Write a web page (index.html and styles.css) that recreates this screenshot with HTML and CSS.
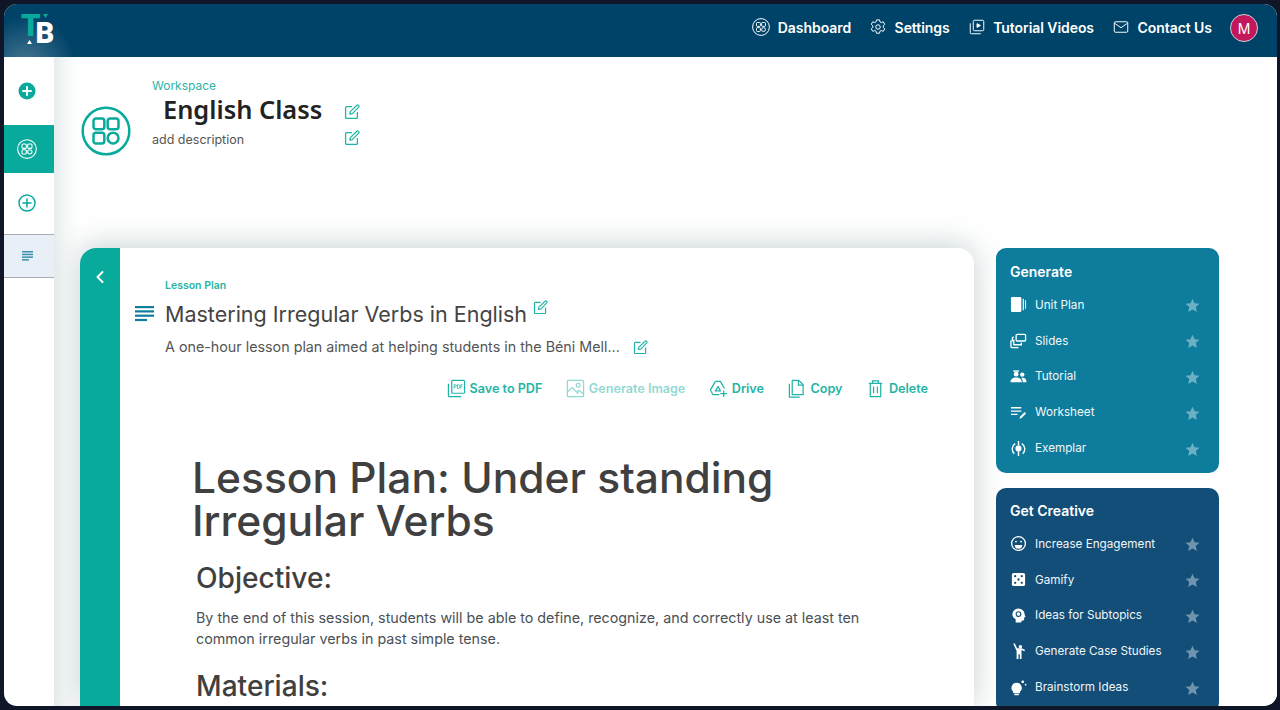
FILE: index.html
```html
<!DOCTYPE html>
<html lang="en">
<head>
	<meta charset="UTF-8">
	<title>English Class</title>
	<link rel="stylesheet" href="styles.css">
</head>
<body>
<svg class="defs" width="0" height="0">
	<symbol id="edit" viewBox="0 0 16 16">
		<path d="M8 2.600H2.600a1 1 0 0 0-1 1v9.800a1 1 0 0 0 1 1h9.800a1 1 0 0 0 1-1V8" fill="none" stroke="currentColor" stroke-width="1.300"/>
		<path d="M5.800 10.200l.5-2.600 6.600-6.300a1 1 0 0 1 1.400 0l.4.4a1 1 0 0 1 0 1.400L8.300 9.700z" fill="none" stroke="currentColor" stroke-width="1.200" stroke-linejoin="round"/>
	</symbol>
	<symbol id="apps" viewBox="0 0 24 24">
		<g fill="none" stroke="currentColor">
			<circle cx="12" cy="12" r="11.200"/>
			<rect x="6" y="6" width="5.200" height="5.200" rx="1.200"/>
			<rect x="12.800" y="6" width="5.200" height="5.200" rx="1.200"/>
			<rect x="6" y="12.800" width="5.200" height="5.200" rx="1.200"/>
			<circle cx="15.400" cy="15.400" r="2.600"/>
		</g>
	</symbol>
	<symbol id="star" viewBox="0 0 16 16">
		<path d="M8 .8l2.200 4.800 5.200.6-3.900 3.500 1.100 5.200L8 12.300l-4.600 2.600 1.100-5.200L.6 6.200l5.200-.6z" fill="currentColor"/>
	</symbol>
</svg>

<div class="app">
	<header class="topbar">
		<div class="logo">
			<span class="logo_t">T</span><span class="logo_b">B</span>
			<svg class="logo_marks" width="30" height="34" viewBox="0 0 30 34"><path d="M22 4h5l-2.500 4z" fill="#08AB9B"/><path d="M8.500 30l2.500 4H6z" fill="#fff"/></svg>
		</div>
		<nav class="topnav">
			<a><svg class="navicon" viewBox="0 0 24 24"><use href="#apps"/></svg>Dashboard</a>
			<a><svg class="navicon" viewBox="0 0 24 24" fill="none" stroke="currentColor"><path d="M10 2.500h4l.6 2.700 1.900.9 2.500-1.100 2 3.400-2 1.900v2.200l2 1.900-2 3.400-2.500-1.100-1.900.9-.6 2.700h-4l-.6-2.700-1.900-.9-2.500 1.100-2-3.400 2-1.900v-2.200l-2-1.900 2-3.400 2.500 1.100 1.900-.9z" stroke-linejoin="round"/><circle cx="12" cy="12" r="3"/></svg>Settings</a>
			<a><svg class="navicon" viewBox="0 0 24 24" fill="none" stroke="currentColor"><rect x="7" y="3" width="14" height="14" rx="1.500"/><path d="M3 7v12.500A1.500 1.500 0 0 0 4.500 21H17"/><path d="M12 7.500l4.500 2.500-4.500 2.500z" fill="currentColor"/></svg>Tutorial Videos</a>
			<a><svg class="navicon" viewBox="0 0 24 24" fill="none" stroke="currentColor"><rect x="3" y="5" width="18" height="14" rx="1.500"/><path d="M3.500 7l8.500 6 8.500-6"/></svg>Contact Us</a>
			<span class="avatar">M</span>
		</nav>
	</header>

	<div class="below">
		<aside class="sidebar">
			<div class="side_item side_first">
				<svg class="sideicon" viewBox="0 0 18 18"><circle cx="9" cy="9" r="8.500" fill="#08AB9B"/><path d="M9 5v8M5 9h8" stroke="#fff" stroke-width="2" stroke-linecap="round"/></svg>
			</div>
			<div class="side_item side_active">
				<svg class="sideicon_big"><use href="#apps"/></svg>
			</div>
			<div class="side_item">
				<svg class="sideicon" viewBox="0 0 18 18" fill="none" stroke="#08AB9B" stroke-width="1.500"><circle cx="9" cy="9" r="8"/><path d="M9 5v8M5 9h8" stroke-linecap="round"/></svg>
			</div>
			<div class="side_doc">
				<svg width="11" height="10" viewBox="0 0 11 10" fill="#3E8FB0"><rect width="11" height="1.500"/><rect y="2.700" width="11" height="1.500"/><rect y="5.400" width="11" height="1.500"/><rect y="8.100" width="7" height="1.500"/></svg>
			</div>
		</aside>

		<main class="content">
			<section class="workspace">
				<svg class="ws_icon"><use href="#apps"/></svg>
				<div class="ws_text">
					<div class="ws_label">Workspace</div>
					<div class="ws_title_row">
						<h1 class="ws_title">English Class</h1>
						<svg class="edit"><use href="#edit"/></svg>
					</div>
					<div class="ws_desc_row">
						<span class="ws_desc">add description</span>
						<svg class="edit"><use href="#edit"/></svg>
					</div>
				</div>
			</section>

			<section class="columns">
				<article class="card">
					<div class="rail">
						<svg width="10" height="14" viewBox="0 0 10 14" fill="none" stroke="#fff" stroke-width="2" stroke-linecap="round" stroke-linejoin="round"><path d="M7.500 2L2.500 7l5 5"/></svg>
					</div>
					<div class="card_body">
						<div class="lp_label">Lesson Plan</div>
						<div class="lp_title_row">
							<svg class="lp_icon" width="19" height="16" viewBox="0 0 19 16" fill="#0E7C9C"><rect width="19" height="2.200"/><rect y="4.300" width="19" height="2.200"/><rect y="8.600" width="19" height="2.200"/><rect y="12.900" width="12" height="2.200"/></svg>
							<h2 class="lp_title">Mastering Irregular Verbs in English</h2>
							<svg class="edit small up"><use href="#edit"/></svg>
						</div>
						<div class="lp_desc_row">
							<span class="lp_desc">A one-hour lesson plan aimed at helping students in the Béni Mell...</span>
							<svg class="edit small"><use href="#edit"/></svg>
						</div>
						<div class="actions">
							<a><svg viewBox="0 0 20 20" fill="none" stroke="currentColor" stroke-width="1.300"><rect x="5" y="1.500" width="13.500" height="13.500" rx="1"/><path d="M1.500 5v12.500a1 1 0 0 0 1 1H15"/><path d="M7.500 10V6h1.300a1 1 0 0 1 0 2.200H7.500M11 6v4h.8a1.500 1.500 0 0 0 0-4zM14.500 10V6h2M14.500 8h1.600" stroke-width=".8"/></svg>Save to PDF</a>
							<a class="faded"><svg viewBox="0 0 20 20" fill="none" stroke="currentColor" stroke-width="1.300"><rect x="1.500" y="1.500" width="17" height="17" rx="1"/><circle cx="12.800" cy="6.500" r="2"/><path d="M1.800 13.500L6.500 9l6.500 6.500M11.500 14l2.300-2 4.500 3.800"/></svg>Generate Image</a>
							<a><svg viewBox="0 0 20 20" fill="none" stroke="currentColor" stroke-width="1.300" stroke-linejoin="round"><path d="M6.800 2.500h5.200l4.300 7.500M6.800 2.500L1.500 11.500l2.700 5H11"/><path d="M6.500 13l3-5 2.500 4.500H7"/><path d="M15.500 12.500v6M12.500 15.500h6" stroke-linecap="round"/></svg>Drive</a>
							<a><svg viewBox="0 0 20 20" fill="none" stroke="currentColor" stroke-width="1.300" stroke-linejoin="round"><path d="M5.500 1.500h7l4.500 4.500v10.500h-11.500z"/><path d="M12 1.500v5h5"/><path d="M2.500 5v14h11"/></svg>Copy</a>
							<a><svg viewBox="0 0 20 20" fill="none" stroke="currentColor" stroke-width="1.300"><path d="M3 4.500h14M7 4.500V2h6v2.500M4.500 4.500v14h11v-14M8 8v7M12 8v7"/></svg>Delete</a>
						</div>
						<div class="doc">
							<h1>Lesson Plan: Under standing Irregular Verbs</h1>
							<h2>Objective:</h2>
							<p>By the end of this session, students will be able to define, recognize, and correctly use at least ten common irregular verbs in past simple tense.</p>
							<h2>Materials:</h2>
						</div>
					</div>
				</article>

				<div class="panels">
					<div class="panel panel_gen">
						<h3>Generate</h3>
						<div class="tool"><svg viewBox="0 0 18 18" fill="#fff"><rect x="1" y="1" width="11" height="16" rx="1.500"/><rect x="13.500" y="3" width="1.200" height="12"/><rect x="16" y="4.500" width="1" height="9"/></svg><span>Unit Plan</span><svg class="star"><use href="#star"/></svg></div>
						<div class="tool"><svg viewBox="0 0 18 18" fill="none" stroke="#fff" stroke-width="1.400"><rect x="6.500" y="2.500" width="10" height="7" rx="1"/><path d="M4 5.500H3.500a1 1 0 0 0-1 1V10M1 9v6.500a1 1 0 0 0 1 1h7"/><path d="M4 8v5.500h8V11"/></svg><span>Slides</span><svg class="star"><use href="#star"/></svg></div>
						<div class="tool"><svg viewBox="0 0 18 18" fill="#fff"><path d="M3.500 2.500h6v1.500h-6z"/><circle cx="6.500" cy="6.500" r="2.500"/><circle cx="13" cy="7" r="2.300"/><path d="M.5 15c0-3 2.500-5 6-5s6 2 6 5zM13.500 15c0-1.800-.5-3.300-1.500-4.500 3-.6 5.500 1 5.500 4.500z"/></svg><span>Tutorial</span><svg class="star"><use href="#star"/></svg></div>
						<div class="tool"><svg viewBox="0 0 18 18" fill="none" stroke="#fff" stroke-width="1.500"><path d="M1 4h11M1 7.500h11M1 11h7"/><path d="M10 16l1-3 4.500-4.500 1.500 1.500-4.500 4.500z" fill="#fff" stroke="none"/></svg><span>Worksheet</span><svg class="star"><use href="#star"/></svg></div>
						<div class="tool"><svg viewBox="0 0 18 18" fill="none" stroke="#fff" stroke-width="1.500"><path d="M5.500 3.800a6.800 6.800 0 0 0-1 10.700M12.500 3.800a6.800 6.800 0 0 1 1 10.700"/><circle cx="9" cy="9" r="2.500" fill="#fff"/><path d="M9 1v5M9 12v5"/></svg><span>Exemplar</span><svg class="star"><use href="#star"/></svg></div>
					</div>
					<div class="panel panel_creative">
						<h3>Get Creative</h3>
						<div class="tool"><svg viewBox="0 0 18 18" fill="none" stroke="#fff" stroke-width="1.400"><circle cx="9" cy="9" r="7.300"/><circle cx="6.300" cy="7" r="1" fill="#fff" stroke="none"/><circle cx="11.700" cy="7" r="1" fill="#fff" stroke="none"/><path d="M5 10.500h8a4 4 0 0 1-8 0z" fill="#fff" stroke="none"/></svg><span>Increase Engagement</span><svg class="star"><use href="#star"/></svg></div>
						<div class="tool"><svg viewBox="0 0 18 18"><rect x="2" y="2" width="14" height="14" rx="2" fill="#fff"/><g fill="#124E78"><circle cx="5.500" cy="5.500" r="1.200"/><circle cx="12.500" cy="5.500" r="1.200"/><circle cx="9" cy="9" r="1.200"/><circle cx="5.500" cy="12.500" r="1.200"/><circle cx="12.500" cy="12.500" r="1.200"/></g></svg><span>Gamify</span><svg class="star"><use href="#star"/></svg></div>
						<div class="tool"><svg viewBox="0 0 18 18"><path d="M9 1.500a6.500 6.500 0 0 1 6.500 6.500l1 2.800h-1.500v2.200a1.500 1.500 0 0 1-1.500 1.500h-1.500v2H6v-3.500C3.800 11.800 2.500 10 2.500 8A6.500 6.500 0 0 1 9 1.500z" fill="#fff"/><circle cx="9" cy="7.500" r="2.500" fill="none" stroke="#124E78" stroke-width="1.200"/></svg><span>Ideas for Subtopics</span><svg class="star"><use href="#star"/></svg></div>
						<div class="tool"><svg viewBox="0 0 18 18" fill="#fff"><circle cx="11" cy="4" r="1.800"/><path d="M3.500.8L5 .3l2.500 5.200h5l3.500 2-.8 1.300-3 -1.300V17h-1.800v-5H9v5H7V8.500z"/></svg><span>Generate Case Studies</span><svg class="star"><use href="#star"/></svg></div>
						<div class="tool"><svg viewBox="0 0 18 18" fill="#fff"><path d="M7 4a5.500 5.500 0 0 1 3.500 9.700V15h-7v-1.300A5.500 5.500 0 0 1 7 4z"/><rect x="4.500" y="15.700" width="5" height="1.500" rx=".7"/><circle cx="13.500" cy="3" r="1.500"/><circle cx="16.500" cy="6" r=".9"/></svg><span>Brainstorm Ideas</span><svg class="star"><use href="#star"/></svg></div>
					</div>
				</div>
			</section>
		</main>
	</div>
</div>
</body>
</html>
```

FILE: styles.css
```css
*{
	box-sizing: border-box;
}
html,body{
	height: 100%;
	overflow: hidden;
}
body{
	margin: 0;
	background: #0E1628;
	padding: 4px 3px 4px 4px;
	font-family: Inter,"Liberation Sans",sans-serif;
	color: #404040;
}
.defs{
	display: block;
	height: 0;
}
.app{
	height: 702px;
	background: #fff;
	border-radius: 13px;
	overflow: hidden;
	display: flex;
	flex-direction: column;
}

/* top bar */
.topbar{
	height: 53px;
	flex: none;
	background: #004368;
	display: flex;
	align-items: center;
	justify-content: space-between;
	background-image: radial-gradient(circle at 22px 62px,rgba(255,255,255,.28),rgba(255,255,255,0) 50px);
}
.logo{
	position: relative;
	align-self: flex-start;
	display: flex;
	align-items: flex-start;
	margin: 6px 0 0 17px;
	font-family: Roboto,sans-serif;
	font-weight: 900;
	line-height: 1;
}
.logo_t{
	color: #08AB9B;
	font-size: 31px;
	letter-spacing: -5px;
}
.logo_b{
	color: #fff;
	font-size: 29px;
	margin-top: 8.600px;
}
.logo_marks{
	position: absolute;
	left: 0;
	top: 0;
}
.topnav{
	display: flex;
	align-items: center;
	gap: 18px;
	margin: -5px 19px 0 0;
}
.topnav a{
	display: flex;
	align-items: center;
	gap: 7.500px;
	margin-bottom: 2px;
	color: #fff;
	font-size: 14px;
	font-weight: 600;
	letter-spacing: -.06px;
}
.navicon{
	width: 18px;
	height: 18px;
	color: #fff;
	stroke-width: 1.300;
}
.avatar{
	width: 28px;
	height: 28px;
	border-radius: 50%;
	background: #C2185B;
	border: 1px solid #c9d3da;
	color: #fff;
	font-size: 14px;
	display: flex;
	align-items: center;
	justify-content: center;
}

/* left rail */
.below{
	flex: 1;
	display: flex;
	min-height: 0;
}
.sidebar{
	width: 50px;
	flex: none;
	display: flex;
	flex-direction: column;
}
.side_item{
	height: 48px;
	padding-right: 4px;
	display: flex;
	align-items: center;
	justify-content: center;
	margin-bottom: 6px;
}
.side_first{
	margin: 10px 0 10px;
}
.side_active{
	background: #08AB9B;
	color: #fff;
}
.sideicon{
	width: 18px;
	height: 18px;
}
.sideicon_big{
	width: 20px;
	height: 20px;
	stroke-width: 1.300;
}
.side_doc{
	height: 44px;
	margin-top: 1px;
	padding-right: 4px;
	background: #E8EFF6;
	border-top: 1px solid #A9ADB2;
	border-bottom: 1px solid #A9ADB2;
	display: flex;
	align-items: center;
	justify-content: center;
}

/* main area */
.content{
	flex: 1;
	min-width: 0;
	overflow: hidden;
	background: linear-gradient(90deg,#E6ECEC,#F6F8F8 12px,#fff 26px);
}
.workspace{
	height: 191px;
	padding: 21px 0 0 27px;
	display: flex;
	align-items: flex-start;
	gap: 21px;
}
.ws_icon{
	width: 50px;
	height: 50px;
	margin-top: 28px;
	color: #08AB9B;
	stroke-width: 1.200;
}
.ws_label{
	color: #2DB5A8;
	font-size: 12px;
	line-height: 15px;
}
.ws_title_row{
	display: flex;
	align-items: center;
	width: 208px;
	justify-content: space-between;
}
.ws_title{
	margin: 0 0 0 11px;
	font-family: "Noto Sans",sans-serif;
	font-size: 25.400px;
	line-height: 33px;
	font-weight: 600;
	color: #222;
}
.ws_title_row .edit{
	margin-top: 5px;
}
.ws_desc_row{
	display: flex;
	align-items: center;
	justify-content: space-between;
	width: 208px;
	margin-top: 3px;
}
.ws_desc{
	margin-top: 3px;
	font-size: 12.500px;
	color: #555;
}
.edit{
	width: 16px;
	height: 16px;
	color: #1FB5A6;
	flex: none;
}
.edit.small{
	width: 15px;
	height: 15px;
}
.edit.up{
	margin: -13px 0 0 0;
}

.columns{
	display: flex;
	align-items: flex-start;
	padding-left: 26px;
}
.card{
	width: 894px;
	flex: none;
	display: flex;
	border-radius: 16px 16px 0 0;
	background: #fff;
	box-shadow: 0 -2px 30px rgba(70,105,110,.32);
	overflow: hidden;
	height: 460px;
}
.rail{
	width: 40px;
	flex: none;
	background: #08AB9B;
	padding: 20px 0 0 15px;
}
.card_body{
	flex: 1;
	padding: 31px 46px 0 15px;
}
.lp_label{
	margin-left: 30px;
	font-size: 10.500px;
	line-height: 13px;
	font-weight: 600;
	color: #1FB5A6;
}
.lp_title_row{
	display: flex;
	align-items: center;
	margin-top: 7px;
}
.lp_icon{
	margin-right: 11px;
}
.lp_title{
	margin: 0 6px 0 0;
	font-size: 21.500px;
	line-height: 30px;
	font-weight: 400;
	color: #444;
}
.lp_desc_row{
	display: flex;
	align-items: center;
	gap: 13px;
	margin: 9px 0 0 30px;
}
.lp_desc{
	font-size: 14.300px;
	line-height: 18px;
	color: #555;
}
.actions{
	display: flex;
	justify-content: flex-end;
	gap: 23.500px;
	margin-top: 23px;
}
.actions a{
	display: flex;
	align-items: center;
	gap: 4px;
	color: #1FB5A6;
	font-size: 12.600px;
	font-weight: 600;
}
.actions svg{
	width: 19px;
	height: 19px;
}
.actions .faded{
	opacity: .5;
}
.doc{
	padding: 58px 45px 0 61px;
}
.doc h1{
	margin: 0 0 0 -4px;
	font-size: 42.500px;
	line-height: 43px;
	font-weight: 450;
	color: #404040;
}
.doc h2{
	margin: 18px 0 0;
	font-size: 28.100px;
	line-height: 36px;
	font-weight: 450;
	color: #404040;
}
.doc p{
	margin: 11px 0 0;
	font-size: 14.300px;
	line-height: 21px;
	color: #4A5055;
}
.doc p + h2{
	margin-top: 19px;
}

/* right panels */
.panels{
	width: 223px;
	flex: none;
	margin-left: 22px;
	display: flex;
	flex-direction: column;
	gap: 15px;
}
.panel{
	border-radius: 10px;
	padding: 15px 14px 7px 14px;
	color: #fff;
}
.panel_gen{
	background: #0E7C9C;
}
.panel_creative{
	background: #124E78;
	padding-top: 14px;
}
.panel h3{
	margin: 0 0 6px;
	font-size: 14px;
	line-height: 18px;
	font-weight: 600;
}
.tool{
	display: flex;
	align-items: center;
	height: 35.800px;
	font-size: 11.700px;
	font-weight: 400;
}
.tool > svg:first-child{
	width: 17px;
	height: 17px;
	flex: none;
	margin-right: 8px;
}
.tool span{
	flex: 1;
	opacity: .95;
}
.star{
	width: 15px;
	height: 15px;
	margin-right: 5px;
	margin-top: 2px;
	color: rgba(255,255,255,.4);
	flex: none;
}
```
